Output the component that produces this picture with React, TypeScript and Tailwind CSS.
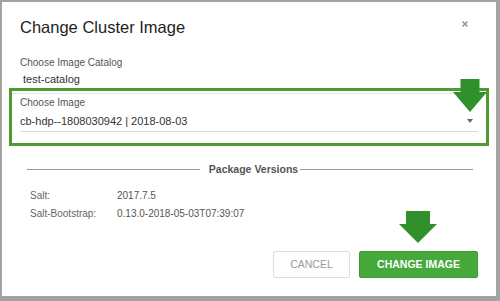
import React from "react";

function DownArrow({ className, shaft, head, shaftH, headH }: { className?: string; shaft: number; head: number; shaftH: number; headH: number }) {
  const w = head;
  const h = shaftH + headH;
  const s0 = (head - shaft) / 2;
  const s1 = s0 + shaft;
  return (
    <svg viewBox={`0 0 ${w} ${h}`} width={w} height={h} className={className}>
      <path d={`M${s0} 0 H${s1} V${shaftH} H${w} L${w / 2} ${h} L0 ${shaftH} H${s0} Z`} fill="#2f902c" />
    </svg>
  );
}

export default function App() {
  return (
    <div
      className="w-[500px] h-[301px] bg-[#a3a3a3] pt-[2px] pl-[2px] overflow-hidden"
      style={{ fontFamily: '"Liberation Sans", Arial, sans-serif' }}
    >
      <div className="relative w-[494px] h-[294px] bg-white">
        <div className="flex items-start justify-between pl-[18px] pt-[15px]">
          <h1 className="text-[16.5px] leading-[20px] text-[#1e1e1e]">Change Cluster Image</h1>
          <svg width="6" height="6" viewBox="0 0 6 6" className="mt-[4px] mr-[28px]">
            <path d="M0.5 0.5 L5.5 5.5 M5.5 0.5 L0.5 5.5" stroke="#8a8a8a" strokeWidth="1.3" />
          </svg>
        </div>

        <div className="pl-[18px] mt-[20px]">
          <p className="text-[10px] leading-[12px] text-[#555]">Choose Image Catalog</p>
          <p className="text-[11px] leading-[13px] text-[#333] pl-[3px] mt-[4px]">test-catalog</p>
        </div>

        <div className="mx-[7px] mt-[2px] border-[3px] border-[#4f9c2e] pb-[11px]">
          <div className="mt-[2px] h-px bg-[#e6e6e6]" />
          <div className="px-[8px] pt-[3px]">
            <p className="text-[10px] leading-[12px] text-[#555]">Choose Image</p>
            <div className="flex items-center justify-between mt-[5px] pb-[3px] border-b border-[#dcdcdc]">
              <span className="text-[11px] leading-[14px] text-[#333]">cb-hdp--1808030942 | 2018-08-03</span>
              <span className="w-0 h-0 border-l-[3px] border-r-[3px] border-t-[4px] border-l-transparent border-r-transparent border-t-[#666] mr-[5px]" />
            </div>
          </div>
        </div>

        <div className="flex items-center ml-[25px] mr-[23px] mt-[17px] h-[13px]">
          <div className="flex-1 h-px bg-[#999]" />
          <span className="text-[10.5px] leading-[13px] font-bold text-[#555] pl-[9px] pr-[2px]">Package Versions</span>
          <div className="flex-1 h-px bg-[#999]" />
        </div>

        <div className="pl-[28px] mt-[14px] text-[10px] leading-[12px] text-[#555]">
          <div className="flex">
            <span className="w-[87px] text-[#666]">Salt:</span>
            <span>2017.7.5</span>
          </div>
          <div className="flex mt-[6px]">
            <span className="w-[87px] text-[#666]">Salt-Bootstrap:</span>
            <span>0.13.0-2018-05-03T07:39:07</span>
          </div>
        </div>

        <div className="flex justify-end gap-[9px] pr-[18px] mt-[31px]">
          <button className="w-[77px] h-[27px] border border-[#dddddd] rounded-[2px] text-[10.5px] text-[#999] bg-white">
            CANCEL
          </button>
          <button className="w-[119px] h-[27px] rounded-[2px] text-[10.5px] font-bold text-white bg-[#45a93b] border border-[#3c9c33]">
            CHANGE IMAGE
          </button>
        </div>

        <DownArrow className="absolute left-[451px] top-[77px]" shaft={19} head={34} shaftH={13} headH={20} />
        <DownArrow className="absolute left-[397px] top-[209px]" shaft={24} head={38} shaftH={13} headH={19} />
      </div>
    </div>
  );
}
